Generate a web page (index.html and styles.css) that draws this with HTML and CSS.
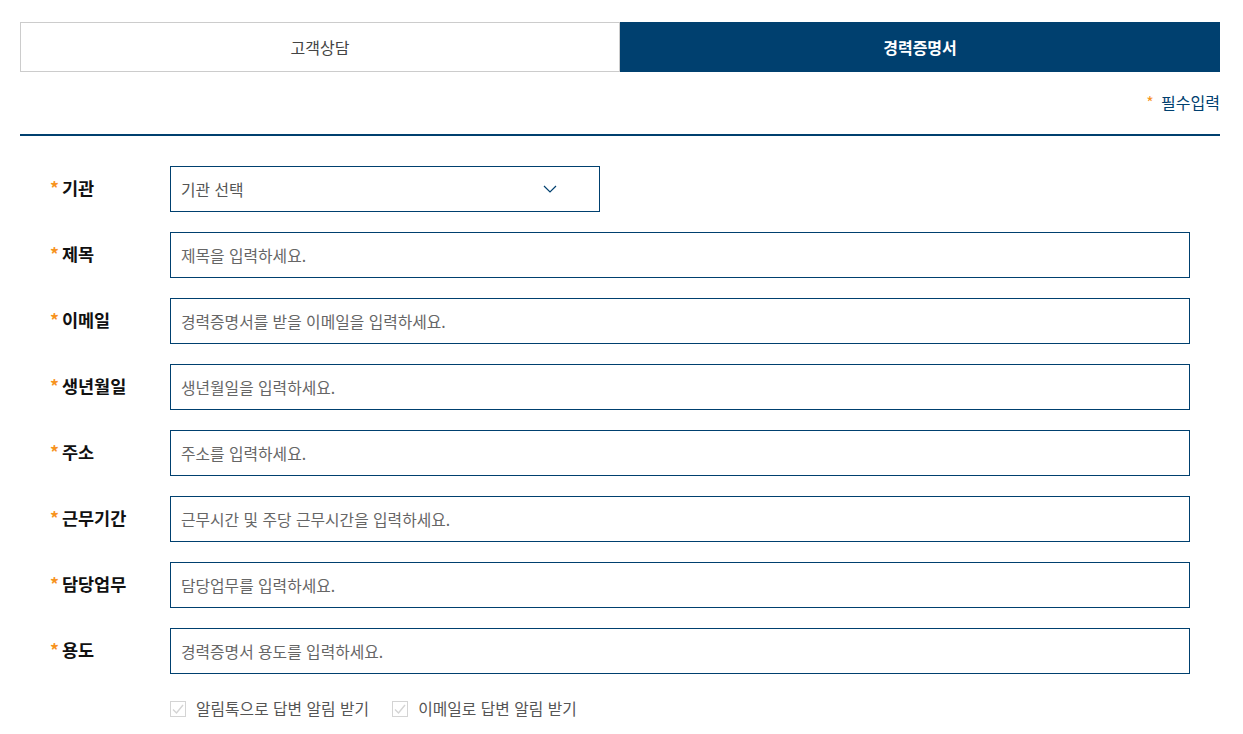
FILE: index.html
```html
<!DOCTYPE html>
<html lang="ko">
<head>
  <meta charset="UTF-8">
  <meta name="viewport" content="width=device-width, initial-scale=1.0">
  <title>경력증명서</title>
  <link rel="stylesheet" href="styles.css">
</head>
<body>

  <div class="wrap">
    <div class="tabs">
      <div class="tab">고객상담</div>
      <div class="tab active">경력증명서</div>
    </div>

    <p class="required-note"><span class="star">*</span> 필수입력</p>

    <div class="form">
      <div class="row">
        <label><span class="star">*</span>기관</label>
        <div class="select">
          <span>기관 선택</span>
          <svg width="14" height="8" viewBox="0 0 14 8"><path d="M1 1 L7 7 L13 1" fill="none" stroke="#00406f" stroke-width="1.2"/></svg>
        </div>
      </div>
      <div class="row">
        <label><span class="star">*</span>제목</label>
        <input type="text" placeholder="제목을 입력하세요.">
      </div>
      <div class="row">
        <label><span class="star">*</span>이메일</label>
        <input type="text" placeholder="경력증명서를 받을 이메일을 입력하세요.">
      </div>
      <div class="row">
        <label><span class="star">*</span>생년월일</label>
        <input type="text" placeholder="생년월일을 입력하세요.">
      </div>
      <div class="row">
        <label><span class="star">*</span>주소</label>
        <input type="text" placeholder="주소를 입력하세요.">
      </div>
      <div class="row">
        <label><span class="star">*</span>근무기간</label>
        <input type="text" placeholder="근무시간 및 주당 근무시간을 입력하세요.">
      </div>
      <div class="row">
        <label><span class="star">*</span>담당업무</label>
        <input type="text" placeholder="담당업무를 입력하세요.">
      </div>
      <div class="row">
        <label><span class="star">*</span>용도</label>
        <input type="text" placeholder="경력증명서 용도를 입력하세요.">
      </div>

      <div class="checks">
        <span class="check">
          <span class="box"><svg width="14" height="14" viewBox="0 0 14 14"><path d="M2 7.5 L5.5 11 L12 3" fill="none" stroke="#d4d4d4" stroke-width="1.4"/></svg></span>
          알림톡으로 답변 알림 받기
        </span>
        <span class="check">
          <span class="box"><svg width="14" height="14" viewBox="0 0 14 14"><path d="M2 7.5 L5.5 11 L12 3" fill="none" stroke="#d4d4d4" stroke-width="1.4"/></svg></span>
          이메일로 답변 알림 받기
        </span>
      </div>
    </div>
  </div>

</body>
</html>
```

FILE: styles.css
```css
body {
  margin: 0;
  background: #fff;
  font-family: "Noto Sans CJK KR", "Noto Sans", sans-serif;
  color: #222;
}

.wrap {
  width: 1200px;
  margin: 0 20px;
  padding-top: 22px;
}

.tabs {
  display: flex;
}

.tab {
  flex: 1;
  height: 50px;
  display: flex;
  align-items: center;
  justify-content: center;
  border: 1px solid #ccc;
  box-sizing: border-box;
  font-size: 16px;
  color: #444;
}

.tab.active {
  background: #00406f;
  border-color: #00406f;
  color: #fff;
  font-weight: bold;
}

.star {
  color: #f7931e;
  margin-right: 3px;
}

.required-note {
  margin: 0;
  height: 64px;
  box-sizing: border-box;
  padding-top: 19px;
  text-align: right;
  font-size: 16px;
  line-height: 22px;
  color: #00406f;
  border-bottom: 2px solid #00406f;
}

.required-note .star {
  margin-right: 3px;
}

.form {
  padding: 30px 30px 0 30px;
}

.row {
  display: flex;
  align-items: center;
  margin-bottom: 20px;
}

.row label {
  width: 120px;
  font-size: 17.5px;
  line-height: 24px;
  padding-bottom: 2px;
  font-weight: bold;
  color: #111;
}

.select,
.row input {
  height: 46px;
  box-sizing: border-box;
  border: 1px solid #00406f;
  padding: 0 10px;
  font-family: inherit;
  font-size: 15.8px;
  color: #333;
}

.row input {
  flex: 1;
  outline: none;
}

.row input::placeholder {
  color: #666;
}

.select {
  width: 430px;
  display: flex;
  align-items: center;
  justify-content: space-between;
  padding-right: 42px;
  color: #555;
}

.checks {
  display: flex;
  gap: 23px;
  padding-left: 120px;
  margin-top: 23px;
}

.check {
  display: flex;
  align-items: center;
  gap: 10px;
  font-size: 15.8px;
  color: #555;
}

.box {
  width: 16px;
  height: 16px;
  box-sizing: border-box;
  border: 1px solid #d4d4d4;
  display: flex;
  align-items: center;
  justify-content: center;
}
```
